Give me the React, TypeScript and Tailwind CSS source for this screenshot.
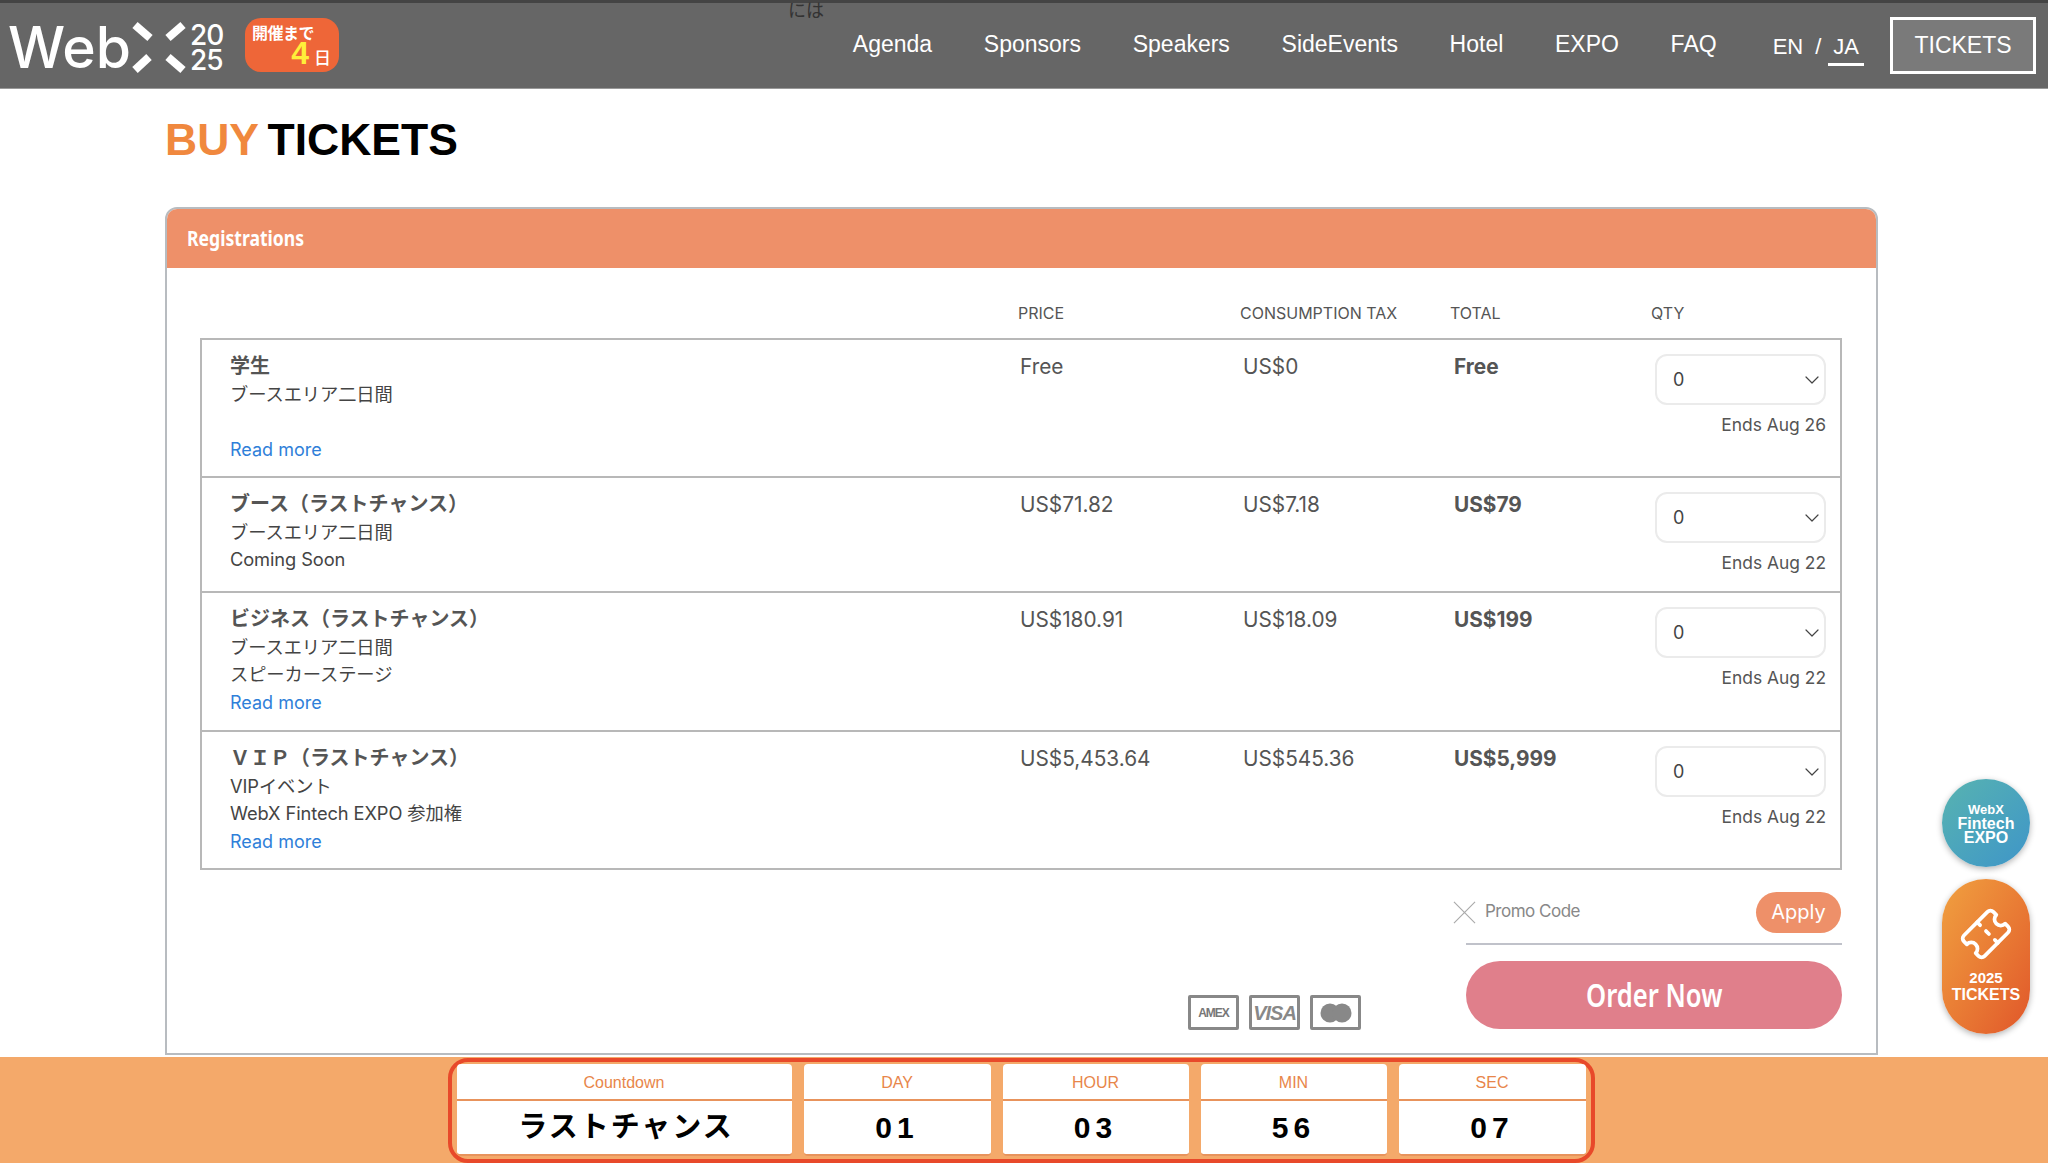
import React from "react";
import { Ticket, ChevronDown } from "lucide-react";

const navItems = ["Agenda", "Sponsors", "Speakers", "SideEvents", "Hotel", "EXPO", "FAQ"];

const rows = [
  { name: "学生", lines: ["ブースエリア二日間", ""], more: true, price: "Free", tax: "US$0", total: "Free", ends: "Ends Aug 26", pad: "pb-[12px]" },
  { name: "ブース（ラストチャンス）", lines: ["ブースエリア二日間", "Coming Soon"], more: false, price: "US$71.82", tax: "US$7.18", total: "US$79", ends: "Ends Aug 22", pad: "pb-[15px]" },
  { name: "ビジネス（ラストチャンス）", lines: ["ブースエリア二日間", "スピーカーステージ"], more: true, price: "US$180.91", tax: "US$18.09", total: "US$199", ends: "Ends Aug 22", pad: "pb-[13px]" },
  { name: "ＶＩＰ（ラストチャンス）", lines: ["VIPイベント", "WebX Fintech EXPO 参加権"], more: true, price: "US$5,453.64", tax: "US$545.36", total: "US$5,999", ends: "Ends Aug 22", pad: "pb-[12px]" },
];

const countdown = [
  { label: "Countdown", value: "ラストチャンス", width: "w-[335px]", text: "text-[29px] tracking-[2px] pl-[4px] pt-[1px]" },
  { label: "DAY", value: "01", width: "w-[187px]", text: "text-[30px] tracking-[5px]" },
  { label: "HOUR", value: "03", width: "w-[186px]", text: "text-[30px] tracking-[5px]" },
  { label: "MIN", value: "56", width: "w-[186px]", text: "text-[30px] tracking-[5px]" },
  { label: "SEC", value: "07", width: "w-[187px]", text: "text-[30px] tracking-[5px]" },
];

function Logo() {
  return (
    <div className="flex items-center shrink-0">
      <svg width="226" height="88" viewBox="0 0 226 88">
        <text x="6" y="67" fontFamily="Inter" fontWeight="500" fontSize="57" fill="#fff">Web</text>
        <g stroke="#fff" strokeWidth="8">
          <path d="M133 24l15 13" />
          <path d="M181 24l-15 13" />
          <path d="M147 56l-14 13" />
          <path d="M166 56l15 13" />
        </g>
        <text x="188" y="44" fontFamily="Inter" fontWeight="500" fontSize="28" letterSpacing="-1" fill="#fff">20</text>
        <text x="188" y="69" fontFamily="Inter" fontWeight="500" fontSize="28" letterSpacing="-1" fill="#fff">25</text>
      </svg>
      <div className="ml-[17px] w-[94px] h-[54px] rounded-[16px] bg-[#ee6638] text-white font-bold pl-[7px] font-['Liberation_Sans','Noto_Sans_CJK_JP',sans-serif]">
        <div className="text-[16px] leading-[18px] pt-[7px] tracking-[-0.5px]">開催まで</div>
        <div className="flex items-baseline justify-end pr-[8px] -mt-[5px] leading-[30px]">
          <span className="text-[32px] text-[#ffef3a] mr-[5px]">4</span>
          <span className="text-[17px] font-medium">日</span>
        </div>
      </div>
    </div>
  );
}

function Header() {
  return (
    <header className="relative h-[89px] bg-[#666666] border-t-[3px] border-[#444444] border-b border-b-[#999999] flex items-center font-['Liberation_Sans',sans-serif] text-white">
      <div className="ml-[2px] -mt-[2px]">
        <Logo />
      </div>
      <span className="absolute left-[788px] -top-[6px] text-[18px] leading-[24px] text-[#333333] font-['Noto_Sans_CJK_JP',sans-serif]">には</span>
      <nav className="ml-auto flex items-center gap-[51.7px] text-[23px] -mt-[2px]">
        {navItems.map((item) => (
          <a key={item}>{item}</a>
        ))}
      </nav>
      <div className="ml-[56px] flex items-center gap-[12px] text-[22px] mt-[1px]">
        <span>EN</span>
        <span>/</span>
        <span className="relative">
          JA
          <span className="absolute -left-[5px] -right-[5px] -bottom-[3px] h-[3px] bg-white" />
        </span>
      </div>
      <a className="ml-[31px] mr-[12px] w-[146px] h-[57px] -mt-[1px] border-[3px] border-white bg-[#7a7a7a] flex items-center justify-center text-[23px]">TICKETS</a>
    </header>
  );
}

function PayCards() {
  return (
    <div className="flex gap-[10px] mr-[105px] mb-[-1px]">
      <div className="w-[51px] h-[35px] border-[3px] border-[#888888] rounded-[2px] flex items-center justify-center text-[12px] font-bold tracking-[-1px] text-[#777777] font-['Liberation_Sans',sans-serif]">AMEX</div>
      <div className="w-[51px] h-[35px] border-[3px] border-[#888888] rounded-[2px] flex items-center justify-center text-[20px] font-bold italic tracking-[-1px] text-[#888888] font-['Liberation_Sans',sans-serif]">VISA</div>
      <div className="w-[51px] h-[35px] border-[3px] border-[#888888] rounded-[2px] flex items-center justify-center">
        <svg width="32" height="20" viewBox="0 0 32 20">
          <circle cx="10" cy="10" r="9.5" fill="#888888" />
          <circle cx="22" cy="10" r="9.5" fill="#888888" />
          <path d="M16 2.6a9.5 9.5 0 0 1 0 14.8a9.5 9.5 0 0 0 0-14.8z" fill="#ffffff" />
        </svg>
      </div>
    </div>
  );
}

function TicketRow({ row, first }: { row: (typeof rows)[number]; first: boolean }) {
  return (
    <div className={`grid grid-cols-[790px_223px_211px_201px_171px] pl-[28px] pt-[11px] ${row.pad} ${first ? "" : "border-t-2 border-[#b8b8b8]"}`}>
      <div>
        <div className="text-[20px] leading-[30px] font-semibold text-[#555555]">{row.name}</div>
        {row.lines.map((line, i) => (
          <div key={i} className="text-[18.3px] leading-[27px] h-[27px] tracking-[-0.1px] text-[#444444]">{line}</div>
        ))}
        {row.more && <a className="block text-[18px] leading-[29px] text-[#2f7fd9]">Read more</a>}
      </div>
      <div className="text-[20.8px] leading-[31px] text-[#555555]">{row.price}</div>
      <div className="text-[20.8px] leading-[31px] text-[#555555]">{row.tax}</div>
      <div className="text-[20.8px] leading-[31px] font-bold text-[#555555]">{row.total}</div>
      <div>
        <div className="mt-[3px] h-[51px] rounded-[12px] border-2 border-[#ebebeb] flex items-center justify-between pl-[16px] text-[18px] text-[#444444]">
          0
          <ChevronDown size={24} strokeWidth={1.2} />
        </div>
        <div className="mt-[7px] text-right text-[17.4px] leading-[26px] text-[#555555]">{row.ends}</div>
      </div>
    </div>
  );
}

function FloatButtons() {
  return (
    <div className="absolute left-[1942px] top-[779px] w-[88px] flex flex-col gap-[12px] text-white font-bold text-center font-['Liberation_Sans',sans-serif]">
      <div className="h-[88px] rounded-full bg-gradient-to-br from-[#58b3b0] to-[#3f95c8] shadow-[0_2px_6px_rgba(0,0,0,0.3)] flex flex-col items-center justify-center">
        <span className="text-[13px] leading-[15px]">WebX</span>
        <span className="text-[16px] leading-[14px]">Fintech</span>
        <span className="text-[16px] leading-[14px]">EXPO</span>
      </div>
      <div className="h-[155px] rounded-full bg-gradient-to-br from-[#f0a040] to-[#e0562a] shadow-[0_2px_6px_rgba(0,0,0,0.3)] flex flex-col items-center pt-[30px]">
        <Ticket size={50} strokeWidth={1.8} className="-rotate-45" />
        <span className="mt-[10px] text-[15px] leading-[17px]">2025</span>
        <span className="text-[16px] leading-[17px]">TICKETS</span>
      </div>
    </div>
  );
}

function CountdownBar() {
  return (
    <div className="absolute left-0 right-0 bottom-0 h-[106px] bg-[#f4a96a] flex justify-center pt-px pr-[6px] font-['Liberation_Sans','Noto_Sans_CJK_JP',sans-serif]">
      <div className="h-[105px] border-[4px] border-[#e8492a] rounded-[20px] flex gap-[12px] px-[5px] pt-[2px]">
        {countdown.map((c) => (
          <div key={c.label} className={`${c.width} h-[92px] bg-white rounded-[4px] border-b-2 border-[#e8935c]`}>
            <div className="h-[37px] pt-[3px] border-b-2 border-[#e8935c] flex items-center justify-center text-[16px] text-[#e8864a]">{c.label}</div>
            <div className={`${c.text} h-[53px] flex items-center justify-center font-bold text-black`}>{c.value}</div>
          </div>
        ))}
      </div>
    </div>
  );
}

export default function App() {
  return (
    <div className="relative h-[1163px] overflow-hidden bg-white font-['Inter','Noto_Sans_CJK_JP',sans-serif]">
      <Header />
      <main className="pl-[165px] w-[1878px]">
        <h1 className="pt-[17px] h-[118px] text-[44.5px] leading-[67px] font-bold text-black [word-spacing:-3px] font-['Liberation_Sans',sans-serif]">
          <span className="text-[#f0883e]">BUY</span> TICKETS
        </h1>
        <section className="h-[848px] border-2 border-[#b8bcc0] rounded-t-[12px] overflow-hidden">
          <div className="h-[59px] bg-[#ee9069] flex items-center pl-[20px] pb-[2px] text-white">
            <span className="inline-block origin-left scale-x-[0.8] text-[22px] font-bold font-['Noto_Sans',sans-serif]">Registrations</span>
          </div>
          <div className="pl-[33px] pr-[34px]">
            <div className="grid grid-cols-[818px_222px_210px_201px_1fr] h-[70px] pt-[33px] text-[16px] leading-[24px] text-[#555555]">
              <span />
              <span>PRICE</span>
              <span>CONSUMPTION TAX</span>
              <span>TOTAL</span>
              <span>QTY</span>
            </div>
            <div className="border-2 border-[#b8b8b8]">
              {rows.map((row, i) => (
                <TicketRow key={row.name} row={row} first={i === 0} />
              ))}
            </div>
            <div className="flex justify-end items-end">
              <PayCards />
              <div className="w-[376px]">
                <div className="h-[73px] pt-[11px] flex items-center -ml-[13px] pr-[1px]">
                  <svg width="23" height="23" viewBox="0 0 24 24" stroke="#aaaaaa" strokeWidth="1.2">
                    <path d="M1 1l22 22M23 1L1 23" />
                  </svg>
                  <span className="ml-[9px] text-[17px] tracking-[-0.5px] text-[#888888]">Promo Code</span>
                  <span className="ml-auto w-[85px] h-[41px] rounded-full bg-[#ee9069] text-white flex items-center justify-center text-[20px]">Apply</span>
                </div>
                <div className="border-b-2 border-[#c0c2ca]" />
                <div className="mt-[16px] h-[68px] rounded-full bg-[#e07f8b] flex items-center justify-center text-white">
                  <span className="inline-block scale-x-[0.8] text-[32px] font-semibold font-['Noto_Sans',sans-serif]">Order Now</span>
                </div>
              </div>
            </div>
          </div>
        </section>
      </main>
      <FloatButtons />
      <CountdownBar />
    </div>
  );
}
